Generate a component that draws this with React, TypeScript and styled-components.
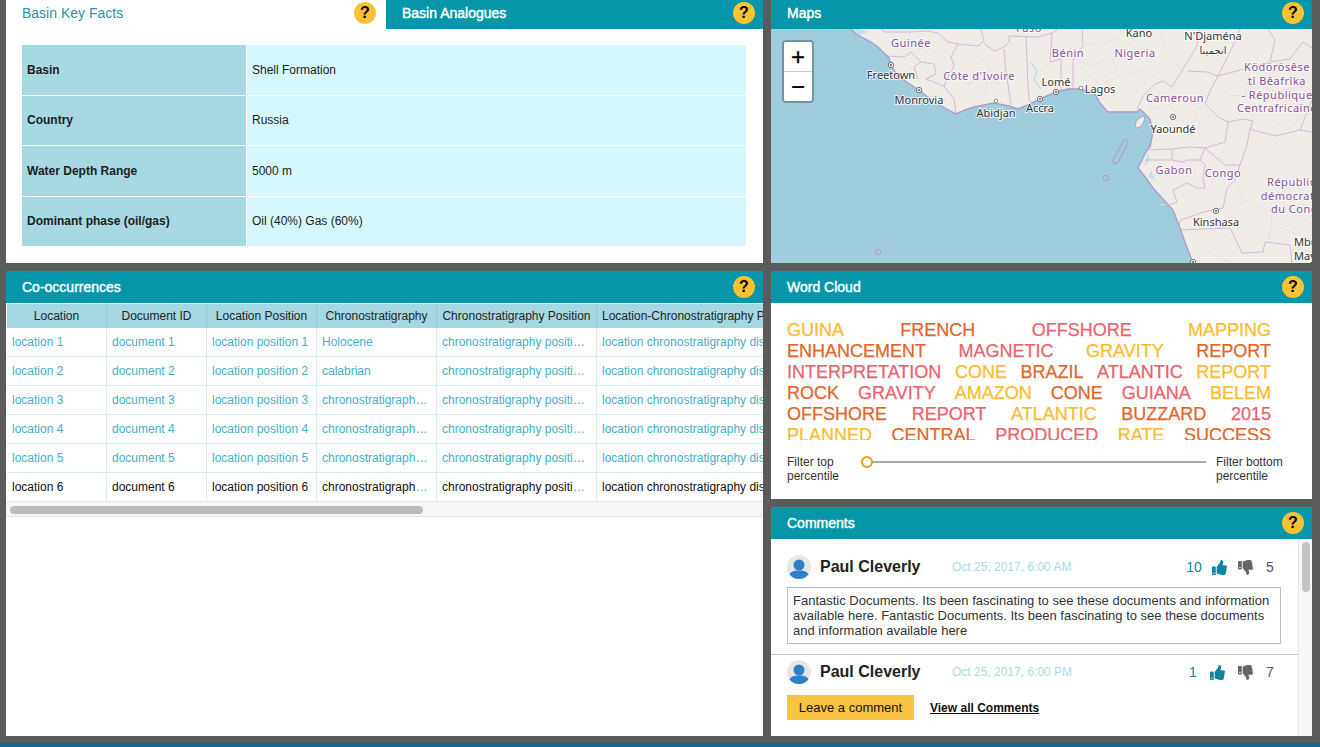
import React from "react";
import styled, { createGlobalStyle } from "styled-components";
import { FaThumbsUp, FaThumbsDown } from "react-icons/fa";

const Global = createGlobalStyle`
  html, body { margin: 0; padding: 0; background: #5b5b5b; overflow: hidden; }
  * { box-sizing: border-box; }
  body { font-family: "Liberation Sans", Arial, sans-serif; font-size: 12px; color: #222; }
`;

const Page = styled.div`
  width: 1320px;
  height: 747px;
  background: #5b5b5b;
  display: flex;
  flex-direction: column;
`;
const Board = styled.div`
  display: grid;
  grid-template-columns: 757px 541px;
  grid-template-rows: 263px 228px 229px;
  gap: 8px;
  padding-left: 6px;
`;
const Panel = styled.section<{ $tall?: boolean }>`
  background: #fff;
  overflow: hidden;
  display: flex;
  flex-direction: column;
  min-height: 0;
  ${(p) => (p.$tall ? "grid-row: span 2;" : "")}
`;
const FooterStrip = styled.div`
  margin-top: auto;
  height: 4px;
  background: #0a6b94;
`;
const Header = styled.header<{ $short?: boolean }>`
  flex: none;
  height: ${(p) => (p.$short ? 29 : 32)}px;
  padding: ${(p) => (p.$short ? "0 8px 3px 16px" : "0 8px 0 16px")};
  background: #0596aa;
  color: #fff;
  display: flex;
  align-items: center;
  justify-content: space-between;
`;
const Title = styled.h2`
  margin: 0;
  font-size: 14px;
  font-weight: 400;
  -webkit-text-stroke: 0.4px #fff;
  color: #fff;
`;
const Help = styled.span`
  width: 22px;
  height: 22px;
  border-radius: 50%;
  background: #fcc233;
  color: #000;
  font-size: 16px;
  font-weight: 700;
  display: flex;
  align-items: center;
  justify-content: center;
`;
const Tabs = styled.div`
  flex: none;
  height: 29px;
  display: flex;
`;
const TabActive = styled.div`
  width: 380px;
  display: flex;
  align-items: center;
  justify-content: space-between;
  padding: 0 10px 3px 16px;
  color: #2a94ab;
  font-size: 14px;
  background: #fff;
`;
const TabOther = styled(Header)`
  flex: 1;
`;
const FactsGrid = styled.div`
  margin: 16px 17px 0 16px;
  height: 201px;
  display: grid;
  grid-template-columns: 224px 1fr;
  grid-auto-rows: 1fr;
  gap: 1px;
`;
const FactLabel = styled.div`
  background: #a7d9e3;
  font-weight: 700;
  color: #1c1c1c;
  display: flex;
  align-items: center;
  padding-left: 5px;
`;
const FactValue = styled.div`
  background: #d5f8fe;
  color: #1c1c1c;
  display: flex;
  align-items: center;
  padding-left: 5px;
`;
const MapBox = styled.div`
  position: relative;
  flex: 1;
  min-height: 0;
  background: #a0cddb;
`;
const MapSvg = styled.svg`
  display: block;
  width: 100%;
  height: 100%;
`;
const Zoom = styled.div`
  position: absolute;
  left: 11px;
  top: 11px;
  width: 32px;
  border: 2px solid rgba(0, 0, 0, 0.28);
  border-radius: 4px;
  overflow: hidden;
  background-clip: padding-box;
`;
const ZoomBtn = styled.div`
  height: 29px;
  background: #fff;
  color: #000;
  font-size: 24px;
  font-weight: 400;
  -webkit-text-stroke: 0.3px #000;
  line-height: 29px;
  text-align: center;
  & + & {
    border-top: 1px solid #ccc;
    height: 30px;
  }
`;
const TableClip = styled.div`
  flex: none;
  overflow: hidden;
  padding: 1px 0 0 1px;
`;
const Table = styled.table`
  border-collapse: separate;
  border-spacing: 0;
  table-layout: fixed;
  width: 1000px;
  font-size: 12px;
`;
const Th = styled.th<{ $left?: boolean }>`
  background: #a5d8e2;
  border-right: 1px solid #93c9d4;
  height: 24px;
  font-weight: 400;
  color: #222;
  padding: 0 5px;
  text-align: ${(p) => (p.$left ? "left" : "center")};
  white-space: nowrap;
  overflow: hidden;
`;
const Td = styled.td`
  height: 29px;
  padding: 0 6px 0 5px;
  color: #45b0c4;
  border-right: 1px solid #d4eef6;
  border-bottom: 1px solid #d4eef6;
  white-space: nowrap;
  overflow: hidden;
  text-overflow: ellipsis;
`;
const Plain = styled.span`
  color: #111;
`;
const HTrack = styled.div`
  flex: none;
  height: 15px;
  background: #f6f6f6;
  border-bottom: 1px solid #e4e4e4;
  padding: 4px 0 0 4px;
`;
const HThumb = styled.div`
  width: 413px;
  height: 8px;
  border-radius: 4px;
  background: #bcbcbc;
`;
const CloudBody = styled.div`
  padding: 17px 41px 0 16px;
`;
const Cloud = styled.div`
  height: 120px;
  overflow: hidden;
`;
const CloudRow = styled.div`
  display: flex;
  justify-content: space-between;
  height: 21px;
  line-height: 21px;
  font-size: 18px;
`;
const Word = styled.span<{ $c: string }>`
  color: ${(p) => p.$c};
  -webkit-text-stroke: 0.25px ${(p) => p.$c};
`;
const FilterRow = styled.div`
  display: flex;
  align-items: flex-start;
  margin-top: 15px;
  margin-right: -30px;
  line-height: 14px;
  color: #333;
`;
const FilterLabel = styled.div<{ $w: number }>`
  width: ${(p) => p.$w}px;
  flex: none;
`;
const SliderTrack = styled.div`
  position: relative;
  flex: none;
  width: 345px;
  height: 2px;
  margin: 6px 10px 0 0;
  background: #aaa;
`;
const SliderKnob = styled.div`
  position: absolute;
  left: 0;
  top: -5px;
  width: 12px;
  height: 12px;
  border-radius: 50%;
  border: 2px solid #f59a0c;
  background: #fff;
`;
const CommentsWrap = styled.div`
  flex: 1;
  min-height: 0;
  display: flex;
`;
const CommentsMain = styled.div`
  flex: 1;
  min-width: 0;
`;
const VTrack = styled.div`
  flex: none;
  width: 14px;
  background: #f8f8f8;
  border-left: 1px solid #e4e4e4;
  padding: 3px 0 0 3px;
`;
const VThumb = styled.div`
  width: 8px;
  height: 50px;
  border-radius: 4px;
  background: #c4c4c4;
`;
const CommentBlock = styled.div`
  padding: 16px 17px 10px 16px;
  border-bottom: 1px solid #c9c9c9;
`;
const CommentHead = styled.div`
  display: flex;
  align-items: center;
  height: 24px;
`;
const Avatar = styled.svg`
  width: 24px;
  height: 24px;
  flex: none;
  margin-right: 9px;
`;
const Name = styled.div`
  width: 132px;
  flex: none;
  font-size: 16px;
  font-weight: 700;
  color: #222;
`;
const DateText = styled.div`
  width: 230px;
  flex: none;
  color: #a8dbe4;
  font-size: 12px;
`;
const UpGroup = styled.div`
  width: 56px;
  flex: none;
  display: flex;
  align-items: center;
  color: #10859f;
`;
const Count = styled.span<{ $w: number }>`
  width: ${(p) => p.$w}px;
  margin-right: 6px;
  text-align: center;
  font-size: 14px;
`;
const Down = styled.div`
  width: 28px;
  flex: none;
  display: flex;
  color: #666;
`;
const DownCount = styled.span`
  color: #555;
  font-size: 14px;
`;
const CommentBox = styled.div`
  margin-top: 8px;
  border: 1px solid #bdbdbd;
  padding: 5px;
  height: 57px;
  font-size: 13px;
  line-height: 15px;
  color: #333;
`;
const SecondBlock = styled.div`
  padding: 5px 17px 0 16px;
`;
const Actions = styled.div`
  display: flex;
  align-items: center;
  gap: 16px;
  margin-top: 11px;
`;
const LeaveBtn = styled.button`
  width: 127px;
  height: 25px;
  border: 0;
  padding: 0;
  background: #fbc343;
  color: #111;
  font: 13px "Liberation Sans", Arial, sans-serif;
`;
const ViewAll = styled.a`
  color: #111;
  font-weight: 700;
  text-decoration: underline;
`;
const Country = styled.text`
  font-family: "Noto Sans", sans-serif;
  font-size: 11px;
  letter-spacing: 0.5px;
  fill: #8a4f96;
  text-anchor: middle;
  paint-order: stroke;
  stroke: rgba(255, 255, 255, 0.7);
  stroke-width: 2px;
`;
const City = styled.text<{ $small?: boolean }>`
  font-family: "Noto Sans", "DejaVu Sans", sans-serif;
  font-size: ${(p) => (p.$small ? 10 : 11)}px;
  fill: #333;
  text-anchor: middle;
  paint-order: stroke;
  stroke: rgba(255, 255, 255, 0.8);
  stroke-width: 2px;
`;
const ClippedCity = styled(City)`
  text-anchor: start;
`;

const Y = "#fdbb2d";
const O = "#e2652a";
const P = "#e8636e";
const cloud: [string, string][][] = [
  [["GUINA", Y], ["FRENCH", O], ["OFFSHORE", P], ["MAPPING", Y]],
  [["ENHANCEMENT", O], ["MAGNETIC", P], ["GRAVITY", Y], ["REPORT", O]],
  [["INTERPRETATION", P], ["CONE", Y], ["BRAZIL", O], ["ATLANTIC", P], ["REPORT", Y]],
  [["ROCK", O], ["GRAVITY", P], ["AMAZON", Y], ["CONE", O], ["GUIANA", P], ["BELEM", Y]],
  [["OFFSHORE", O], ["REPORT", P], ["ATLANTIC", Y], ["BUZZARD", O], ["2015", P]],
  [["PLANNED", Y], ["CENTRAL", O], ["PRODUCED", P], ["RATE", Y], ["SUCCESS", O]],
];

const widths = [100, 100, 110, 120, 160, 410];
const heads = [
  "Location",
  "Document ID",
  "Location Position",
  "Chronostratigraphy",
  "Chronostratigraphy Position",
  "Location-Chronostratigraphy Position",
];
const chrono = ["Holocene", "calabrian"];
const rows = [1, 2, 3, 4, 5, 6];

const coast =
  "M851 29L856 34 861 37 871 42 878 47 883 52 889 58 891 64 896 74 908 83 919 90 934 102 945 108 956 114 965 110 974 107 994 103 1009 106 1018 109 1030 104 1040 99 1056 92 1068 89 1080 89 1095 94 1100 103 1108 112 1125 112 1137 112 1140 109 1150 119 1153 132 1150 147 1147 150 1138 168 1146 178 1153 188 1163 199 1173 210 1180 228 1186 245 1193 263";

const borders = [
  "M881 29L884 32 911 32 928 31 938 33 948 42 958 44 951 57 954 66 944 86 954 99 956 114",
  "M886 56L904 57 911 52 921 62 914 67 918 79",
  "M921 62L934 64 936 74 926 79 944 86",
  "M958 44L978 46 984 41 981 29",
  "M984 43L994 51 1004 47 1009 42 1009 36 1038 37 1052 33 1058 29",
  "M1004 49L1006 72 1009 91 1011 105",
  "M1026 37L1027 60 1028 88 1030 103",
  "M1052 33L1050 62 1061 59 1061 90",
  "M1073 89L1073 59 1083 46 1082 29",
  "M1137 109L1143 96 1155 84 1163 81 1172 87 1182 71 1188 61 1197 46 1200 29",
  "M1188 71L1207 72 1218 76 1210 91 1205 104 1217 116 1228 122 1225 142 1205 148 1190 147 1172 149 1147 150",
  "M1218 76L1237 71 1253 67 1270 62 1290 59 1303 42 1312 48",
  "M1240 29L1233 46 1218 76",
  "M1228 122L1243 119 1253 121 1250 129 1275 136 1300 130 1312 132",
  "M1172 149L1172 160 1145 160",
  "M1172 160L1183 162 1187 160 1200 160 1205 148",
  "M1200 160L1205 165 1203 178 1205 188 1197 188 1187 183 1173 190 1177 202 1170 205",
  "M1205 148L1225 165 1240 165 1247 145 1250 129",
  "M1240 165L1235 180 1227 188 1223 208 1203 212 1190 217 1180 220 1179 230",
  "M1180 230L1230 228 1242 253 1263 252 1265 242 1290 245 1292 263",
  "M1300 130L1312 100",
  "M1270 62L1275 40 1268 29",
];
const minor = [
  "M920 33L918 48 930 55 940 50 947 62",
  "M960 60L975 52 990 68 985 90 990 103",
  "M965 85L985 78 1000 85",
  "M950 60L975 74 965 92",
  "M1085 46L1105 42 1120 38",
  "M1085 70L1100 85 1118 75 1130 90 1135 100",
  "M1073 59L1090 65 1112 60 1125 50 1135 35",
  "M1112 60L1118 75 1145 70 1163 81",
  "M1160 30L1167 50 1182 71",
  "M1228 95L1245 96 1262 88 1280 92 1300 85 1312 90",
  "M1245 96L1250 70",
  "M1270 120L1290 130 1305 110",
  "M1243 200L1272 212 1285 205 1312 225",
  "M1235 180L1243 200 1230 228",
  "M1272 212L1270 240",
  "M1275 165L1290 180 1312 170",
  "M1200 245L1215 255 1230 263",
  "M1030 60L1040 72 1050 62",
  "M900 75L912 68 925 78",
  "M1160 205L1177 202",
  "M1186 140L1200 125 1190 105 1215 100",
  "M1150 110L1170 105 1186 125",
  "M1265 242L1275 225 1312 240",
];
const capitals: [number, number][] = [
  [891, 65],
  [919, 90],
  [1040, 99],
  [1056, 92],
  [1173, 117],
  [1216, 211],
  [1193, 262],
];

function WestAfricaMap() {
  return (
    <MapSvg viewBox="771 29 541 234" preserveAspectRatio="none">
      <path d={`${coast}L1312 263 1312 29Z`} fill="#f0ede8" />
      <path d="M1148 152L1144 166 1150 160ZM1148 178L1151 170 1155 180Z" fill="#c4e0e8" />
      <path d="M1031 62L1037 72 1034 80 1041 89" fill="none" stroke="#c4e0e8" strokeWidth="1.5" />
      <path d="M851 29L858 36 868 32 860 29Z" fill="#c4e0e8" />
      {minor.map((d) => (
        <path key={d} d={d} fill="none" stroke="#ecdcea" strokeWidth="0.8" />
      ))}
      {borders.map((d) => (
        <path key={d} d={d} fill="none" stroke="#d9b8da" strokeWidth="1" />
      ))}
      <path d={coast} fill="none" stroke="#ad9ccd" strokeWidth="1.4" />
      <path
        d="M1144 116C1146 118 1143 126 1138 128 1133 128 1135 118 1144 116Z"
        fill="#f0ede8"
        stroke="#b59ad0"
        strokeWidth="1"
      />
      <path
        d="M1124 140C1127 139 1129 142 1127 145L1118 162C1116 165 1112 164 1113 160Z"
        fill="none"
        stroke="#b59ad0"
        strokeWidth="1.2"
      />
      <circle cx="1106" cy="178" r="2.8" fill="none" stroke="#b59ad0" />
      <circle cx="878" cy="252" r="2.8" fill="none" stroke="#b59ad0" />
      {capitals.map(([x, y]) => (
        <g key={x}>
          <circle cx={x} cy={y} r="2.7" fill="#f5f5f5" stroke="#555" strokeWidth="0.8" />
          <circle cx={x} cy={y} r="1" fill="#555" />
        </g>
      ))}
      <circle cx="996" cy="101" r="1.8" fill="#fff" stroke="#666" strokeWidth="0.7" />
      <circle cx="1081" cy="88" r="1.8" fill="#fff" stroke="#666" strokeWidth="0.7" />
      <Country x="1029" y="32">Faso</Country>
      <Country x="911" y="47">Guinée</Country>
      <Country x="979" y="80">Côte d'Ivoire</Country>
      <Country x="1068" y="57">Bénin</Country>
      <Country x="1135" y="57">Nigeria</Country>
      <Country x="1175" y="102">Cameroun</Country>
      <Country x="1174" y="174">Gabon</Country>
      <Country x="1223" y="177">Congo</Country>
      <Country x="1277" y="71">Ködörösêse</Country>
      <Country x="1277" y="85">tî Bêafrîka</Country>
      <Country x="1277" y="99">- République</Country>
      <Country x="1277" y="112">Centrafricaine</Country>
      <Country x="1299" y="186">République</Country>
      <Country x="1300" y="200">démocratique</Country>
      <Country x="1298" y="213">du Congo</Country>
      <City x="891" y="79">Freetown</City>
      <City x="919" y="104">Monrovia</City>
      <City x="996" y="117">Abidjan</City>
      <City x="1040" y="112">Accra</City>
      <City x="1056" y="86">Lomé</City>
      <City x="1100" y="93">Lagos</City>
      <City x="1139" y="37">Kano</City>
      <City x="1213" y="40">N'Djaména</City>
      <City x="1213" y="54" $small>انجمينا</City>
      <City x="1173" y="133">Yaoundé</City>
      <City x="1216" y="226">Kinshasa</City>
      <ClippedCity x="1294" y="246">Mbuji-</ClippedCity>
      <ClippedCity x="1294" y="260">Mayi</ClippedCity>
    </MapSvg>
  );
}

function UserIcon() {
  return (
    <Avatar viewBox="0 0 24 24">
      <circle cx="12" cy="12" r="12" fill="#e6e6e6" />
      <circle cx="12" cy="10" r="5.5" fill="#2d7fc9" />
      <path d="M2.5 19.5C4 16 8 15.5 12 15.5S20 16 21.5 19.5C19 22.5 15.5 24 12 24S5 22.5 2.5 19.5Z" fill="#2d7fc9" />
    </Avatar>
  );
}

function CommentHeader(props: { date: string; up: number; down: number; upW: number }) {
  return (
    <CommentHead>
      <UserIcon />
      <Name>Paul Cleverly</Name>
      <DateText>{props.date}</DateText>
      <UpGroup>
        <Count $w={props.upW}>{props.up}</Count>
        <FaThumbsUp size={15} />
      </UpGroup>
      <Down>
        <FaThumbsDown size={15} />
      </Down>
      <DownCount>{props.down}</DownCount>
    </CommentHead>
  );
}

export default function App() {
  return (
    <Page>
      <Global />
      <Board>
        <Panel>
          <Tabs>
            <TabActive>
              Basin Key Facts
              <Help>?</Help>
            </TabActive>
            <TabOther $short as="div">
              <Title>Basin Analogues</Title>
              <Help>?</Help>
            </TabOther>
          </Tabs>
          <FactsGrid>
            <FactLabel>Basin</FactLabel>
            <FactValue>Shell Formation</FactValue>
            <FactLabel>Country</FactLabel>
            <FactValue>Russia</FactValue>
            <FactLabel>Water Depth Range</FactLabel>
            <FactValue>5000 m</FactValue>
            <FactLabel>Dominant phase (oil/gas)</FactLabel>
            <FactValue>Oil (40%) Gas (60%)</FactValue>
          </FactsGrid>
        </Panel>
        <Panel>
          <Header $short>
            <Title>Maps</Title>
            <Help>?</Help>
          </Header>
          <MapBox>
            <WestAfricaMap />
            <Zoom>
              <ZoomBtn>+</ZoomBtn>
              <ZoomBtn>−</ZoomBtn>
            </Zoom>
          </MapBox>
        </Panel>
        <Panel $tall>
          <Header>
            <Title>Co-occurrences</Title>
            <Help>?</Help>
          </Header>
          <TableClip>
            <Table>
              <colgroup>
                {widths.map((w, i) => (
                  <col key={i} style={{ width: w }} />
                ))}
              </colgroup>
              <thead>
                <tr>
                  {heads.map((h, i) => (
                    <Th key={h} $left={i === 5}>
                      {h}
                    </Th>
                  ))}
                </tr>
              </thead>
              <tbody>
                {rows.map((n) => {
                  const texts = [
                    `location ${n}`,
                    `document ${n}`,
                    `location position ${n}`,
                    chrono[n - 1] ?? `chronostratigraphy ${n}`,
                    `chronostratigraphy position ${n}`,
                    "location chronostratigraphy distance value in kilometres",
                  ];
                  return (
                    <tr key={n}>
                      {texts.map((t, i) => (
                        <Td key={i}>{n === 6 ? <Plain>{t}</Plain> : t}</Td>
                      ))}
                    </tr>
                  );
                })}
              </tbody>
            </Table>
          </TableClip>
          <HTrack>
            <HThumb />
          </HTrack>
        </Panel>
        <Panel>
          <Header>
            <Title>Word Cloud</Title>
            <Help>?</Help>
          </Header>
          <CloudBody>
            <Cloud>
              {cloud.map((row, i) => (
                <CloudRow key={i}>
                  {row.map(([w, c]) => (
                    <Word key={w} $c={c}>
                      {w}
                    </Word>
                  ))}
                </CloudRow>
              ))}
            </Cloud>
            <FilterRow>
              <FilterLabel $w={74}>
                Filter top
                <br />
                percentile
              </FilterLabel>
              <SliderTrack>
                <SliderKnob />
              </SliderTrack>
              <FilterLabel $w={80}>
                Filter bottom
                <br />
                percentile
              </FilterLabel>
            </FilterRow>
          </CloudBody>
        </Panel>
        <Panel>
          <Header>
            <Title>Comments</Title>
            <Help>?</Help>
          </Header>
          <CommentsWrap>
            <CommentsMain>
              <CommentBlock>
                <CommentHeader date="Oct 25, 2017, 6:00 AM" up={10} down={5} upW={24} />
                <CommentBox>
                  Fantastic Documents. Its been fascinating to see these documents and information available here.
                  Fantastic Documents. Its been fascinating to see these documents and information available here
                </CommentBox>
              </CommentBlock>
              <SecondBlock>
                <CommentHeader date="Oct 25, 2017, 6:00 PM" up={1} down={7} upW={22} />
                <Actions>
                  <LeaveBtn>Leave a comment</LeaveBtn>
                  <ViewAll>View all Comments</ViewAll>
                </Actions>
              </SecondBlock>
            </CommentsMain>
            <VTrack>
              <VThumb />
            </VTrack>
          </CommentsWrap>
        </Panel>
      </Board>
      <FooterStrip />
    </Page>
  );
}
